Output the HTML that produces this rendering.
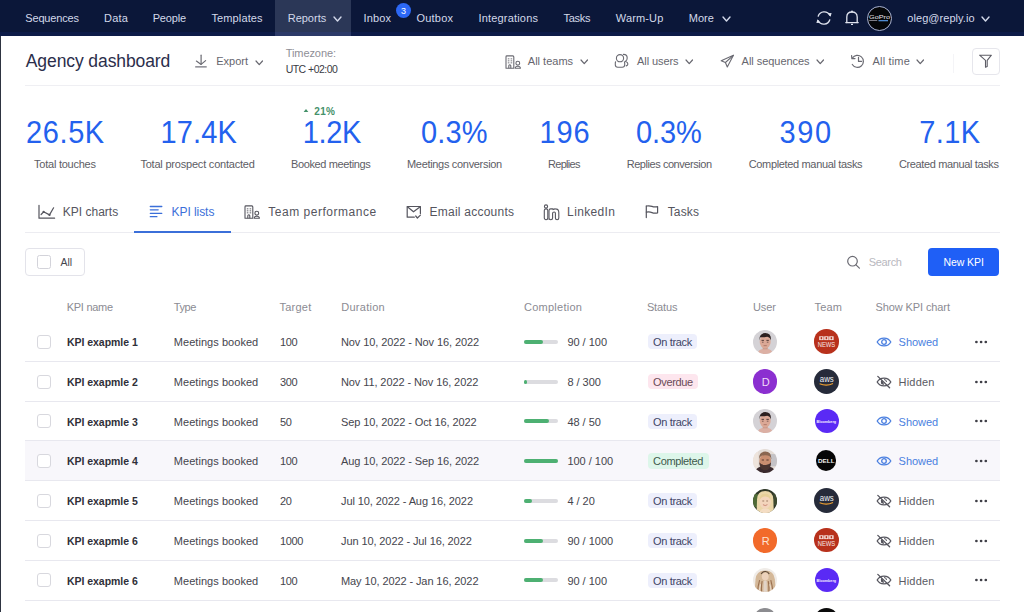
<!DOCTYPE html>
<html><head><meta charset="utf-8"><title>Agency dashboard</title>
<style>
html,body{margin:0;padding:0;}
body{width:1024px;height:612px;overflow:hidden;position:relative;background:#ffffff;font-family:"Liberation Sans",sans-serif;}
.t{position:absolute;white-space:nowrap;line-height:1;font-family:"Liberation Sans",sans-serif;}
.i{position:absolute;overflow:visible;}
</style></head><body>
<div style="position:absolute;left:0;top:0;width:1024px;height:36px;background:#0b1739"></div>
<div style="position:absolute;left:0;top:32px;width:1024px;height:4px;background:#0d1b48"></div>
<div style="position:absolute;left:275px;top:0;width:76px;height:36px;background:#2b3757"></div>
<div style="position:absolute;left:275px;top:32px;width:76px;height:4px;background:#2c3a68"></div>
<span class="t" style="left:25.30px;top:13.00px;font-size:11px;letter-spacing:-0.168px;color:#d3d9ea;">Sequences</span>
<span class="t" style="left:104.00px;top:13.00px;font-size:11px;letter-spacing:0.252px;color:#d3d9ea;">Data</span>
<span class="t" style="left:152.70px;top:13.00px;font-size:11px;letter-spacing:-0.171px;color:#d3d9ea;">People</span>
<span class="t" style="left:211.40px;top:13.00px;font-size:11px;letter-spacing:0.133px;color:#d3d9ea;">Templates</span>
<span class="t" style="left:287.70px;top:13.00px;font-size:11px;letter-spacing:-0.002px;color:#d3d9ea;">Reports</span>
<span class="t" style="left:363.60px;top:13.00px;font-size:11px;letter-spacing:0.123px;color:#d3d9ea;">Inbox</span>
<span class="t" style="left:416.40px;top:13.00px;font-size:11px;letter-spacing:0.227px;color:#d3d9ea;">Outbox</span>
<span class="t" style="left:478.40px;top:13.00px;font-size:11px;letter-spacing:0.192px;color:#d3d9ea;">Integrations</span>
<span class="t" style="left:563.60px;top:13.00px;font-size:11px;letter-spacing:-0.304px;color:#d3d9ea;">Tasks</span>
<span class="t" style="left:615.80px;top:13.00px;font-size:11px;letter-spacing:0.143px;color:#d3d9ea;">Warm-Up</span>
<span class="t" style="left:688.80px;top:13.00px;font-size:11px;letter-spacing:0.014px;color:#d3d9ea;">More</span>
<span class="t" style="left:907.30px;top:13.00px;font-size:11px;letter-spacing:0.058px;color:#d3d9ea;">oleg@reply.io</span>
<svg class="i" style="left:333px;top:15.600000000000001px;" width="9" height="6" viewBox="0 0 9 6"><path d="M1 1 L4.5 5 L8 1" fill="none" stroke="#d3d9ea" stroke-width="1.4" stroke-linecap="round" stroke-linejoin="round"/></svg>
<svg class="i" style="left:721.6px;top:15.600000000000001px;" width="9" height="6" viewBox="0 0 9 6"><path d="M1 1 L4.5 5 L8 1" fill="none" stroke="#d3d9ea" stroke-width="1.4" stroke-linecap="round" stroke-linejoin="round"/></svg>
<svg class="i" style="left:981px;top:15.600000000000001px;" width="9" height="6" viewBox="0 0 9 6"><path d="M1 1 L4.5 5 L8 1" fill="none" stroke="#d3d9ea" stroke-width="1.4" stroke-linecap="round" stroke-linejoin="round"/></svg>
<div style="position:absolute;left:395.6px;top:2.7px;width:15px;height:15px;border-radius:50%;background:#2c68f6"></div>
<span class="t" style="left:400.90px;top:7.00px;font-size:9px;letter-spacing:0.000px;color:#ffffff;">3</span>
<svg class="i" style="left:815px;top:9px;" width="18" height="18" viewBox="0 0 18 18"><g fill="none" stroke="#dfe3ee" stroke-width="1.3" stroke-linecap="round"><path d="M3.2 7.2 A6.3 6.3 0 0 1 14.8 6.2"/><path d="M14.8 10.8 A6.3 6.3 0 0 1 3.2 11.8"/></g><path d="M12.6 4.2 L16.6 3.9 L15.6 7.8 Z" fill="#dfe3ee"/><path d="M5.4 13.8 L1.4 14.1 L2.4 10.2 Z" fill="#dfe3ee"/></svg>
<svg class="i" style="left:844px;top:9px;" width="16" height="18" viewBox="0 0 16 18"><g fill="none" stroke="#dfe3ee" stroke-width="1.3" stroke-linejoin="round" stroke-linecap="round"><path d="M2.8 13.5 L2.8 8 C2.8 4.8 5 3 8 3 C11 3 13.2 4.8 13.2 8 L13.2 13.5"/><path d="M1.8 13.6 L14.2 13.6"/></g><circle cx="8" cy="2.6" r="1" fill="#dfe3ee"/><rect x="7" y="14.8" width="2" height="1.2" fill="#dfe3ee"/></svg>
<div style="position:absolute;left:867.1px;top:5.6px;width:23px;height:23px;border-radius:50%;background:#050608;border:1px solid #aab4d4"></div>
<svg class="i" style="left:867px;top:5px;" width="26" height="26" viewBox="0 0 26 26"><text x="12.6" y="14.4" text-anchor="middle" font-family="Liberation Sans" font-size="4.8" fill="#e4e4ea" textLength="21" lengthAdjust="spacingAndGlyphs">GoPro</text><rect x="2.2" y="15.2" width="8" height="0.8" fill="#9a9aa6"/><rect x="11.5" y="15" width="9.5" height="1.3" fill="#4f8ad0"/></svg>
<div style="position:absolute;left:0;top:36px;width:1.3px;height:576px;background:#2e3441"></div>
<span class="t" style="left:25.80px;top:53.00px;font-size:17.5px;letter-spacing:-0.096px;color:#2b2e4b;">Agency dashboard</span>
<span class="t" style="left:216.20px;top:56.00px;font-size:11px;letter-spacing:0.002px;color:#66666e;">Export</span>
<svg class="i" style="left:255.3px;top:59.6px;" width="8.5" height="5.6" viewBox="0 0 8.5 5.6"><path d="M1 1 L4.25 4.6 L7.5 1" fill="none" stroke="#66666e" stroke-width="1.2" stroke-linecap="round" stroke-linejoin="round"/></svg>
<svg class="i" style="left:194px;top:54px;" width="14" height="14" viewBox="0 0 14 14"><g fill="none" stroke="#6a6a72" stroke-width="1.2" stroke-linecap="round" stroke-linejoin="round"><path d="M7.1 1.2 L7.1 10.2"/><path d="M2.4 7.1 L7.1 10.4 L11.6 6.6"/></g><rect x="1.2" y="12.1" width="11.5" height="1.5" fill="#8a8a92"/></svg>
<span class="t" style="left:285.80px;top:48.00px;font-size:11px;letter-spacing:-0.093px;color:#8e8e96;">Timezone:</span>
<span class="t" style="left:285.70px;top:64.00px;font-size:10.5px;letter-spacing:-0.533px;color:#3a3a44;">UTC +02:00</span>
<span class="t" style="left:527.80px;top:56.00px;font-size:11px;letter-spacing:0.009px;color:#66666e;">All teams</span>
<svg class="i" style="left:580.2px;top:58.6px;" width="8.5" height="5.6" viewBox="0 0 8.5 5.6"><path d="M1 1 L4.25 4.6 L7.5 1" fill="none" stroke="#66666e" stroke-width="1.2" stroke-linecap="round" stroke-linejoin="round"/></svg>
<span class="t" style="left:637.00px;top:56.00px;font-size:11px;letter-spacing:-0.073px;color:#66666e;">All users</span>
<svg class="i" style="left:685.3px;top:58.6px;" width="8.5" height="5.6" viewBox="0 0 8.5 5.6"><path d="M1 1 L4.25 4.6 L7.5 1" fill="none" stroke="#66666e" stroke-width="1.2" stroke-linecap="round" stroke-linejoin="round"/></svg>
<span class="t" style="left:741.60px;top:56.00px;font-size:11px;letter-spacing:-0.041px;color:#66666e;">All sequences</span>
<svg class="i" style="left:816.2px;top:58.6px;" width="8.5" height="5.6" viewBox="0 0 8.5 5.6"><path d="M1 1 L4.25 4.6 L7.5 1" fill="none" stroke="#66666e" stroke-width="1.2" stroke-linecap="round" stroke-linejoin="round"/></svg>
<span class="t" style="left:872.60px;top:56.00px;font-size:11px;letter-spacing:0.163px;color:#66666e;">All time</span>
<svg class="i" style="left:916.4px;top:58.6px;" width="8.5" height="5.6" viewBox="0 0 8.5 5.6"><path d="M1 1 L4.25 4.6 L7.5 1" fill="none" stroke="#66666e" stroke-width="1.2" stroke-linecap="round" stroke-linejoin="round"/></svg>
<svg class="i" style="left:505.3px;top:54.5px;" width="17" height="14" viewBox="0 0 17 14"><g fill="none" stroke="#6a6a72" stroke-width="1.1" stroke-linejoin="round"><path d="M1 13.2 L1 1.8 Q1 0.9 1.9 0.9 L7.8 0.9 Q8.8 0.9 8.8 1.9 L8.8 13.2 Z"/><path d="M3.8 13.2 L3.8 10.8 Q3.8 9.8 4.8 9.8 Q5.8 9.8 5.8 10.8 L5.8 13.2"/><circle cx="12.8" cy="8.2" r="1.9"/><path d="M10.2 13.2 Q10.2 11.2 12.8 11.2 Q15.4 11.2 15.4 13.2 Z"/></g><g fill="#6a6a72"><rect x="2.8" y="3.4" width="1.6" height="0.9"/><rect x="5.6" y="3.4" width="1.6" height="0.9"/><rect x="2.8" y="5.4" width="1.6" height="0.9"/><rect x="5.6" y="5.4" width="1.6" height="0.9"/><rect x="2.8" y="7.4" width="1.6" height="0.9"/><rect x="5.6" y="7.4" width="1.6" height="0.9"/></g></svg>
<svg class="i" style="left:614px;top:53px;" width="16" height="16" viewBox="0 0 16 16"><g fill="none" stroke="#6a6a72" stroke-width="1.1" stroke-linecap="round"><circle cx="6" cy="5.2" r="3.6"/><path d="M1.6 8.8 Q1.3 9.4 1.3 10.6 L1.3 11.8 Q1.3 14.3 3.8 14.3 L8.2 14.3 Q10.7 14.3 10.7 11.8 L10.7 10.6 Q10.7 9.4 10.4 8.8"/><path d="M9.4 1.4 Q13.2 1.3 13.2 5 Q13.2 7.2 11.6 8.2"/><path d="M11.6 8.4 Q13.9 9.2 13.9 11 Q13.9 12.4 12.2 12.9"/></g></svg>
<svg class="i" style="left:720px;top:54px;" width="15" height="15" viewBox="0 0 15 15"><g fill="none" stroke="#6a6a72" stroke-width="1.1" stroke-linejoin="round" stroke-linecap="round"><path d="M13.4 1.3 L1.2 6.7 L5.4 8.5 L7.3 13 Z"/><path d="M5.4 8.5 L13.4 1.3"/></g></svg>
<svg class="i" style="left:850px;top:54px;" width="16" height="16" viewBox="0 0 16 16"><g fill="none" stroke="#6a6a72" stroke-width="1.2" stroke-linecap="round" stroke-linejoin="round"><path d="M2.4 4.0 A6 6 0 1 1 2.3 10.5"/><path d="M1.6 1.6 L1.9 4.7 L5.0 4.6"/><path d="M8.5 3.4 L8.5 7.4 L11.6 7.4"/></g></svg>
<div style="position:absolute;left:953px;top:53.5px;width:1px;height:19px;background:#f4f4f7"></div>
<div style="position:absolute;left:972.2px;top:47.6px;width:25.5px;height:25px;border:1px solid #e6e6ec;border-radius:4px"></div>
<svg class="i" style="left:978px;top:54px;" width="15" height="15" viewBox="0 0 15 15"><path d="M1.6 1.2 L13.4 1.2 L9.2 6.4 L9.2 12.6 L7.5 13.2 L7.5 6.4 Z" fill="none" stroke="#5d5d66" stroke-width="1.1" stroke-linejoin="round"/></svg>
<div style="position:absolute;left:25px;top:85.3px;width:975px;height:1px;background:#efeff3"></div>
<span class="t" style="left:26.10px;top:119.00px;font-size:29px;letter-spacing:0.581px;color:#2361ee;transform:scaleY(1.075);transform-origin:0 24px;">26.5K</span>
<span class="t" style="left:160.40px;top:119.00px;font-size:29px;letter-spacing:0.156px;color:#2361ee;transform:scaleY(1.075);transform-origin:0 24px;">17.4K</span>
<span class="t" style="left:302.70px;top:119.00px;font-size:29px;letter-spacing:-0.351px;color:#2361ee;transform:scaleY(1.075);transform-origin:0 24px;">1.2K</span>
<span class="t" style="left:421.10px;top:119.00px;font-size:29px;letter-spacing:0.103px;color:#2361ee;transform:scaleY(1.075);transform-origin:0 24px;">0.3%</span>
<span class="t" style="left:539.50px;top:119.00px;font-size:29px;letter-spacing:0.864px;color:#2361ee;transform:scaleY(1.075);transform-origin:0 24px;">196</span>
<span class="t" style="left:636.00px;top:119.00px;font-size:29px;letter-spacing:-0.064px;color:#2361ee;transform:scaleY(1.075);transform-origin:0 24px;">0.3%</span>
<span class="t" style="left:779.50px;top:119.00px;font-size:29px;letter-spacing:1.564px;color:#2361ee;transform:scaleY(1.075);transform-origin:0 24px;">390</span>
<span class="t" style="left:919.30px;top:119.00px;font-size:29px;letter-spacing:0.349px;color:#2361ee;transform:scaleY(1.075);transform-origin:0 24px;">7.1K</span>
<span class="t" style="left:34.10px;top:159.00px;font-size:11px;letter-spacing:-0.244px;color:#5d5d65;">Total touches</span>
<span class="t" style="left:140.40px;top:159.00px;font-size:11px;letter-spacing:-0.206px;color:#5d5d65;">Total prospect contacted</span>
<span class="t" style="left:291.00px;top:159.00px;font-size:11px;letter-spacing:-0.371px;color:#5d5d65;">Booked meetings</span>
<span class="t" style="left:407.00px;top:159.00px;font-size:11px;letter-spacing:-0.316px;color:#5d5d65;">Meetings conversion</span>
<span class="t" style="left:548.00px;top:159.00px;font-size:11px;letter-spacing:-0.698px;color:#5d5d65;">Replies</span>
<span class="t" style="left:626.70px;top:159.00px;font-size:11px;letter-spacing:-0.443px;color:#5d5d65;">Replies conversion</span>
<span class="t" style="left:748.70px;top:159.00px;font-size:11px;letter-spacing:-0.341px;color:#5d5d65;">Completed manual tasks</span>
<span class="t" style="left:899.00px;top:159.00px;font-size:11px;letter-spacing:-0.374px;color:#5d5d65;">Created manual tasks</span>
<span class="t" style="left:314.20px;top:107.00px;font-size:10px;letter-spacing:0.395px;color:#45916a;font-weight:700;">21%</span>
<svg class="i" style="left:303px;top:108px;" width="6" height="5" viewBox="0 0 6 5"><path d="M0.6 4 L3 1 L5.4 4 Z" fill="#45916a"/></svg>
<span class="t" style="left:62.70px;top:206.00px;font-size:12px;letter-spacing:0.016px;color:#55555e;">KPI charts</span>
<span class="t" style="left:171.50px;top:206.00px;font-size:12px;letter-spacing:-0.055px;color:#3b6fd9;">KPI lists</span>
<span class="t" style="left:268.20px;top:206.00px;font-size:12px;letter-spacing:0.530px;color:#55555e;">Team performance</span>
<span class="t" style="left:429.50px;top:206.00px;font-size:12px;letter-spacing:0.241px;color:#55555e;">Email accounts</span>
<span class="t" style="left:567.10px;top:206.00px;font-size:12px;letter-spacing:0.361px;color:#55555e;">LinkedIn</span>
<span class="t" style="left:667.70px;top:206.00px;font-size:12px;letter-spacing:0.132px;color:#55555e;">Tasks</span>
<div style="position:absolute;left:25px;top:232px;width:975px;height:1px;background:#ececf1"></div>
<div style="position:absolute;left:134.4px;top:231px;width:96.4px;height:2px;background:#3b6fd9"></div>
<svg class="i" style="left:37px;top:204px;" width="19" height="16" viewBox="0 0 19 16"><g fill="none" stroke="#55555e" stroke-width="1.2" stroke-linecap="round" stroke-linejoin="round"><path d="M2 1.3 L2 14.2 L17.6 14.2"/><path d="M4.1 10.5 L6.6 7.8 L12.5 10.9 L16.6 3.8"/></g><circle cx="6.6" cy="7.8" r="1.1" fill="#55555e"/><circle cx="12.5" cy="10.9" r="1.1" fill="#55555e"/></svg>
<svg class="i" style="left:149px;top:205px;" width="14" height="13" viewBox="0 0 14 13"><g stroke="#3b6fd9" stroke-width="1.3" stroke-linecap="round"><path d="M1.3 1.5 L12.8 1.5"/><path d="M1.3 4.8 L9.2 4.8"/><path d="M1.3 8.3 L12.8 8.3"/><path d="M1.3 11.7 L7.9 11.7"/></g></svg>
<svg class="i" style="left:244.3px;top:204.8px;" width="17" height="14" viewBox="0 0 17 14"><g fill="none" stroke="#55555e" stroke-width="1.1" stroke-linejoin="round"><path d="M1 13.2 L1 1.8 Q1 0.9 1.9 0.9 L7.8 0.9 Q8.8 0.9 8.8 1.9 L8.8 13.2 Z"/><path d="M3.8 13.2 L3.8 10.8 Q3.8 9.8 4.8 9.8 Q5.8 9.8 5.8 10.8 L5.8 13.2"/><circle cx="12.8" cy="8.2" r="1.9"/><path d="M10.2 13.2 Q10.2 11.2 12.8 11.2 Q15.4 11.2 15.4 13.2 Z"/></g><g fill="#55555e"><rect x="2.8" y="3.4" width="1.6" height="0.9"/><rect x="5.6" y="3.4" width="1.6" height="0.9"/><rect x="2.8" y="5.4" width="1.6" height="0.9"/><rect x="5.6" y="5.4" width="1.6" height="0.9"/><rect x="2.8" y="7.4" width="1.6" height="0.9"/><rect x="5.6" y="7.4" width="1.6" height="0.9"/></g></svg>
<svg class="i" style="left:406px;top:205px;" width="16" height="15" viewBox="0 0 16 15"><g fill="none" stroke="#55555e" stroke-width="1.2" stroke-linecap="round" stroke-linejoin="round"><path d="M8.3 12.2 L1.2 12.2 L1.2 1.5 L14.4 1.5 L14.4 8.6"/><path d="M1.4 1.8 L7.5 6.8 L14.2 1.8"/><path d="M9.7 11 L11.4 13 L14.4 10.1"/></g></svg>
<svg class="i" style="left:542px;top:203px;" width="19" height="18" viewBox="0 0 19 18"><g fill="none" stroke="#55555e" stroke-width="1.1"><circle cx="4" cy="3.5" r="1.6"/><rect x="2.3" y="5.9" width="3.5" height="10.8" rx="1.7"/><path d="M7 16.7 L7 7.6 Q7 5.9 8.7 5.9 L10.5 5.9 Q10.9 6 11.1 6.5 Q12.3 5.8 13.4 5.9 Q16.8 6 16.8 9.6 L16.8 15 Q16.8 16.7 15.1 16.7 Q13.4 16.7 13.4 15 L13.4 10.3 Q13.4 9 12.2 9 Q10.6 9 10.6 10.3 L10.6 15 Q10.6 16.7 8.8 16.7 Q7 16.7 7 15 Z"/></g></svg>
<svg class="i" style="left:645px;top:204px;" width="14" height="15" viewBox="0 0 14 15"><g fill="none" stroke="#55555e" stroke-width="1.2" stroke-linecap="round" stroke-linejoin="round"><path d="M1.3 13.6 L1.3 2.0"/><path d="M1.3 2.0 Q4.5 1.4 7 2.4 Q9.5 3.4 12.6 2.6 L12.6 8.8 Q9.5 9.6 7 8.6 Q4.5 7.6 1.3 8.2"/></g></svg>
<div style="position:absolute;left:25.3px;top:248.2px;width:57.5px;height:25.7px;border:1px solid #e3e3ea;border-radius:4px"></div>
<div style="position:absolute;left:37.3px;top:255.2px;width:11.6px;height:11.7px;border:1px solid #d3d3da;border-radius:2.5px;background:#fff"></div>
<span class="t" style="left:60.50px;top:257.00px;font-size:10.5px;letter-spacing:-0.083px;color:#45454d;">All</span>
<svg class="i" style="left:845px;top:255px;" width="16" height="16" viewBox="0 0 16 16"><g fill="none" stroke="#6a6a72" stroke-width="1.2" stroke-linecap="round"><circle cx="7.5" cy="6.2" r="4.8"/><path d="M11 9.8 L14.4 13.2"/></g></svg>
<span class="t" style="left:868.70px;top:257.00px;font-size:11px;letter-spacing:-0.310px;color:#b8b8be;">Search</span>
<div style="position:absolute;left:927.6px;top:248.4px;width:71.8px;height:27.6px;background:#1f5ff6;border-radius:4px"></div>
<span class="t" style="left:943.40px;top:257.00px;font-size:10.5px;letter-spacing:-0.074px;color:#ffffff;">New KPI</span>
<span class="t" style="left:66.70px;top:302.00px;font-size:11px;letter-spacing:-0.272px;color:#8b8b93;">KPI name</span>
<span class="t" style="left:173.75px;top:302.00px;font-size:11px;letter-spacing:-0.399px;color:#8b8b93;">Type</span>
<span class="t" style="left:279.40px;top:302.00px;font-size:11px;letter-spacing:0.256px;color:#8b8b93;">Target</span>
<span class="t" style="left:341.25px;top:302.00px;font-size:11px;letter-spacing:0.267px;color:#8b8b93;">Duration</span>
<span class="t" style="left:524.00px;top:302.00px;font-size:11px;letter-spacing:0.251px;color:#8b8b93;">Completion</span>
<span class="t" style="left:646.90px;top:302.00px;font-size:11px;letter-spacing:-0.117px;color:#8b8b93;">Status</span>
<span class="t" style="left:753.00px;top:302.00px;font-size:11px;letter-spacing:-0.074px;color:#8b8b93;">User</span>
<span class="t" style="left:814.60px;top:302.00px;font-size:11px;letter-spacing:0.168px;color:#8b8b93;">Team</span>
<span class="t" style="left:875.40px;top:302.00px;font-size:11px;letter-spacing:-0.093px;color:#8b8b93;">Show KPI chart</span>
<div style="position:absolute;left:25px;top:440px;width:975px;height:40px;background:#f8f7fb"></div>
<div style="position:absolute;left:25px;top:361px;width:975px;height:1px;background:#e8e8ef"></div>
<div style="position:absolute;left:37.2px;top:334.80px;width:12px;height:12px;border:1px solid #d8d8de;border-radius:3px;background:#fff"></div>
<span class="t" style="left:66.90px;top:337.00px;font-size:10.5px;letter-spacing:-0.025px;color:#2f2f38;font-weight:700;">KPI exapmle 1</span>
<span class="t" style="left:173.80px;top:337.00px;font-size:11px;letter-spacing:0.045px;color:#45454d;">Meetings booked</span>
<span class="t" style="left:280.10px;top:337.00px;font-size:11px;letter-spacing:-0.374px;color:#45454d;">100</span>
<span class="t" style="left:341.00px;top:337.00px;font-size:11px;letter-spacing:-0.098px;color:#45454d;">Nov 10, 2022 - Nov 16, 2022</span>
<div style="position:absolute;left:524.2px;top:339.80px;width:33.8px;height:4px;border-radius:2px;background:#dcdce0"></div>
<div style="position:absolute;left:524.2px;top:339.80px;width:18.60px;height:4px;border-radius:2px;background:#4db072"></div>
<span class="t" style="left:567.40px;top:337.00px;font-size:11px;letter-spacing:-0.022px;color:#45454d;">90 / 100</span>
<div style="position:absolute;left:647.8px;top:334.20px;width:49.60px;height:15.3px;border-radius:4px;background:#edeffc"></div>
<span class="t" style="left:653.10px;top:337.00px;font-size:11px;letter-spacing:-0.356px;color:#404565;">On track</span>
<div style="position:absolute;left:753.10px;top:329.60px;width:24.4px;height:24.4px;border-radius:50%;overflow:hidden"><svg width="24.4" height="24.4" viewBox="0 0 24 24" style="display:block"><rect width="24" height="24" fill="#d4d2d6"/><path d="M4 24 Q5 18.5 12 18 Q19 18.5 20 24 Z" fill="#dcb0a4"/><rect x="9.6" y="15" width="4.8" height="4" fill="#c99888"/><ellipse cx="12" cy="11.6" rx="5.4" ry="6.6" fill="#dba896"/><path d="M6.4 10.4 Q5.8 3.2 12 3 Q18.4 3.2 17.6 10.4 Q17 7 14 6.6 Q10 7.4 7.2 7.2 Q6.6 8.4 6.4 10.4 Z" fill="#2c2020"/><path d="M8.4 10.2 h2.4 M13.2 10.2 h2.4" stroke="#4a3432" stroke-width="0.9"/><path d="M8.8 12 h1.6 M13.6 12 h1.6" stroke="#6a4a44" stroke-width="0.8"/><path d="M10.4 15.4 h3.2" stroke="#a87060" stroke-width="0.8"/></svg></div>
<div style="position:absolute;left:814.20px;top:329.40px;width:24.4px;height:24.2px;border-radius:50%;background:#b8311c"></div>
<svg class="i" style="left:814.0px;top:329.3px;" width="25" height="25" viewBox="0 0 25 25"><g fill="#f5e6e2"><rect x="5.2" y="7.3" width="4.4" height="3.8"/><rect x="10.2" y="7.3" width="4.4" height="3.8"/><rect x="15.2" y="7.3" width="4.4" height="3.8"/></g><g fill="#b8311c"><rect x="6.6" y="8.1" width="1.6" height="2.2"/><rect x="11.6" y="8.1" width="1.6" height="2.2"/><rect x="16.6" y="8.1" width="1.6" height="2.2"/></g><text x="12.5" y="17.6" text-anchor="middle" font-family="Liberation Sans" font-size="6.4" fill="#f6e8e4" textLength="17.6" lengthAdjust="spacingAndGlyphs">NEWS</text></svg>
<svg class="i" style="left:876px;top:335.8px;" width="16" height="12" viewBox="0 0 16 12"><g fill="none" stroke="#4a7fe0" stroke-width="1.3"><path d="M1.2 6 C4 0.8 12 0.8 14.8 6 C12 11.2 4 11.2 1.2 6 Z"/><circle cx="8" cy="6" r="2.3"/></g></svg>
<span class="t" style="left:898.60px;top:337.00px;font-size:11px;letter-spacing:-0.051px;color:#4a7fe0;">Showed</span>
<svg class="i" style="left:974px;top:339.8px;" width="14" height="4" viewBox="0 0 14 4"><g fill="#3f3f47"><circle cx="2.4" cy="2" r="1.35"/><circle cx="7.1" cy="2" r="1.35"/><circle cx="11.8" cy="2" r="1.35"/></g></svg>
<div style="position:absolute;left:25px;top:401px;width:975px;height:1px;background:#e8e8ef"></div>
<div style="position:absolute;left:37.2px;top:374.55px;width:12px;height:12px;border:1px solid #d8d8de;border-radius:3px;background:#fff"></div>
<span class="t" style="left:66.90px;top:377.00px;font-size:10.5px;letter-spacing:-0.025px;color:#2f2f38;font-weight:700;">KPI exapmle 2</span>
<span class="t" style="left:173.80px;top:377.00px;font-size:11px;letter-spacing:0.045px;color:#45454d;">Meetings booked</span>
<span class="t" style="left:280.10px;top:377.00px;font-size:11px;letter-spacing:-0.374px;color:#45454d;">300</span>
<span class="t" style="left:341.00px;top:377.00px;font-size:11px;letter-spacing:-0.098px;color:#45454d;">Nov 11, 2022 - Nov 16, 2022</span>
<div style="position:absolute;left:524.2px;top:379.55px;width:33.8px;height:4px;border-radius:2px;background:#dcdce0"></div>
<div style="position:absolute;left:524.2px;top:379.55px;width:3.00px;height:4px;border-radius:2px;background:#4db072"></div>
<span class="t" style="left:567.40px;top:377.00px;font-size:11px;letter-spacing:-0.022px;color:#45454d;">8 / 300</span>
<div style="position:absolute;left:647.8px;top:373.95px;width:50.55px;height:15.3px;border-radius:4px;background:#fde6ee"></div>
<span class="t" style="left:653.10px;top:377.00px;font-size:11px;letter-spacing:-0.356px;color:#6a4a57;">Overdue</span>
<div style="position:absolute;left:753.10px;top:369.35px;width:24.4px;height:24.4px;border-radius:50%;background:#8b2fd0"></div>
<span class="t" style="left:761.70px;top:377.00px;font-size:11px;letter-spacing:0.000px;color:#f1dcf8;">D</span>
<div style="position:absolute;left:814.00px;top:369.05px;width:25px;height:25px;border-radius:50%;background:#262b3a"></div>
<svg class="i" style="left:814.0px;top:369.05px;" width="25" height="25" viewBox="0 0 25 25"><text x="12.8" y="13.4" text-anchor="middle" font-family="Liberation Sans" font-size="8.6" fill="#eef0f4" textLength="14" lengthAdjust="spacingAndGlyphs">aws</text><path d="M5.6 14.8 Q12.5 17.6 19 14.6" fill="none" stroke="#f0a030" stroke-width="1.1"/></svg>
<svg class="i" style="left:876px;top:374.55px;" width="16" height="14" viewBox="0 0 16 14"><g fill="none" stroke="#55555e" stroke-width="1.3" stroke-linecap="round"><path d="M1.2 7 C4 1.8 12 1.8 14.8 7 C12 12.2 4 12.2 1.2 7 Z"/><path d="M1.8 1.4 L13.6 12.8"/></g><path d="M5.9 5.0 A2.6 2.6 0 0 0 8.2 9.6 Z" fill="#55555e"/><path d="M8 4.5 A2.5 2.5 0 0 1 10.5 7" fill="none" stroke="#55555e" stroke-width="1"/></svg>
<span class="t" style="left:898.60px;top:377.00px;font-size:11px;letter-spacing:0.188px;color:#5a5a63;">Hidden</span>
<svg class="i" style="left:974px;top:379.55px;" width="14" height="4" viewBox="0 0 14 4"><g fill="#3f3f47"><circle cx="2.4" cy="2" r="1.35"/><circle cx="7.1" cy="2" r="1.35"/><circle cx="11.8" cy="2" r="1.35"/></g></svg>
<div style="position:absolute;left:25px;top:440px;width:975px;height:1px;background:#e8e8ef"></div>
<div style="position:absolute;left:37.2px;top:414.30px;width:12px;height:12px;border:1px solid #d8d8de;border-radius:3px;background:#fff"></div>
<span class="t" style="left:66.90px;top:417.00px;font-size:10.5px;letter-spacing:-0.025px;color:#2f2f38;font-weight:700;">KPI exapmle 3</span>
<span class="t" style="left:173.80px;top:417.00px;font-size:11px;letter-spacing:0.045px;color:#45454d;">Meetings booked</span>
<span class="t" style="left:280.10px;top:417.00px;font-size:11px;letter-spacing:-0.374px;color:#45454d;">50</span>
<span class="t" style="left:341.00px;top:417.00px;font-size:11px;letter-spacing:-0.098px;color:#45454d;">Sep 10, 2022 - Oct 16, 2022</span>
<div style="position:absolute;left:524.2px;top:419.30px;width:33.8px;height:4px;border-radius:2px;background:#dcdce0"></div>
<div style="position:absolute;left:524.2px;top:419.30px;width:25.30px;height:4px;border-radius:2px;background:#4db072"></div>
<span class="t" style="left:567.40px;top:417.00px;font-size:11px;letter-spacing:-0.022px;color:#45454d;">48 / 50</span>
<div style="position:absolute;left:647.8px;top:413.70px;width:49.60px;height:15.3px;border-radius:4px;background:#edeffc"></div>
<span class="t" style="left:653.10px;top:417.00px;font-size:11px;letter-spacing:-0.356px;color:#404565;">On track</span>
<div style="position:absolute;left:753.10px;top:409.10px;width:24.4px;height:24.4px;border-radius:50%;overflow:hidden"><svg width="24.4" height="24.4" viewBox="0 0 24 24" style="display:block"><rect width="24" height="24" fill="#d4d2d6"/><path d="M4 24 Q5 18.5 12 18 Q19 18.5 20 24 Z" fill="#dcb0a4"/><rect x="9.6" y="15" width="4.8" height="4" fill="#c99888"/><ellipse cx="12" cy="11.6" rx="5.4" ry="6.6" fill="#dba896"/><path d="M6.4 10.4 Q5.8 3.2 12 3 Q18.4 3.2 17.6 10.4 Q17 7 14 6.6 Q10 7.4 7.2 7.2 Q6.6 8.4 6.4 10.4 Z" fill="#2c2020"/><path d="M8.4 10.2 h2.4 M13.2 10.2 h2.4" stroke="#4a3432" stroke-width="0.9"/><path d="M8.8 12 h1.6 M13.6 12 h1.6" stroke="#6a4a44" stroke-width="0.8"/><path d="M10.4 15.4 h3.2" stroke="#a87060" stroke-width="0.8"/></svg></div>
<div style="position:absolute;left:814.50px;top:409.10px;width:24px;height:24px;border-radius:50%;background:#5a2af5"></div>
<svg class="i" style="left:814.0px;top:408.8px;" width="25" height="25" viewBox="0 0 25 25"><text x="12.3" y="14.2" text-anchor="middle" font-family="Liberation Sans" font-size="4" font-weight="700" fill="#f4f0ff" textLength="19.6" lengthAdjust="spacingAndGlyphs">Bloomberg</text></svg>
<svg class="i" style="left:876px;top:415.3px;" width="16" height="12" viewBox="0 0 16 12"><g fill="none" stroke="#4a7fe0" stroke-width="1.3"><path d="M1.2 6 C4 0.8 12 0.8 14.8 6 C12 11.2 4 11.2 1.2 6 Z"/><circle cx="8" cy="6" r="2.3"/></g></svg>
<span class="t" style="left:898.60px;top:417.00px;font-size:11px;letter-spacing:-0.051px;color:#4a7fe0;">Showed</span>
<svg class="i" style="left:974px;top:419.3px;" width="14" height="4" viewBox="0 0 14 4"><g fill="#3f3f47"><circle cx="2.4" cy="2" r="1.35"/><circle cx="7.1" cy="2" r="1.35"/><circle cx="11.8" cy="2" r="1.35"/></g></svg>
<div style="position:absolute;left:25px;top:480px;width:975px;height:1px;background:#e8e8ef"></div>
<div style="position:absolute;left:37.2px;top:454.05px;width:12px;height:12px;border:1px solid #d8d8de;border-radius:3px;background:#fff"></div>
<span class="t" style="left:66.90px;top:456.00px;font-size:10.5px;letter-spacing:-0.025px;color:#2f2f38;font-weight:700;">KPI exapmle 4</span>
<span class="t" style="left:173.80px;top:456.00px;font-size:11px;letter-spacing:0.045px;color:#45454d;">Meetings booked</span>
<span class="t" style="left:280.10px;top:456.00px;font-size:11px;letter-spacing:-0.374px;color:#45454d;">100</span>
<span class="t" style="left:341.00px;top:456.00px;font-size:11px;letter-spacing:-0.098px;color:#45454d;">Aug 10, 2022 - Sep 16, 2022</span>
<div style="position:absolute;left:524.2px;top:459.05px;width:33.8px;height:4px;border-radius:2px;background:#dcdce0"></div>
<div style="position:absolute;left:524.2px;top:459.05px;width:33.80px;height:4px;border-radius:2px;background:#4db072"></div>
<span class="t" style="left:567.40px;top:456.00px;font-size:11px;letter-spacing:-0.022px;color:#45454d;">100 / 100</span>
<div style="position:absolute;left:647.8px;top:453.45px;width:60.85px;height:15.3px;border-radius:4px;background:#ddf6ea"></div>
<span class="t" style="left:653.10px;top:456.00px;font-size:11px;letter-spacing:-0.356px;color:#3e5a4c;">Completed</span>
<div style="position:absolute;left:753.10px;top:448.85px;width:24.4px;height:24.4px;border-radius:50%;overflow:hidden"><svg width="24.4" height="24.4" viewBox="0 0 24 24" style="display:block"><rect width="24" height="24" fill="#e4dcd6"/><rect x="17" y="5" width="7" height="12" fill="#c4c2c6"/><rect x="0" y="3" width="5" height="16" fill="#eee4dc"/><path d="M1 24 Q3 17 12 16.5 Q21 17 23 24 Z" fill="#3a2a2e"/><ellipse cx="12" cy="12.2" rx="5.8" ry="7.2" fill="#c98e70"/><path d="M6.2 13 Q6.5 20.8 12 20.8 Q17.5 20.8 17.8 13 Q15.5 16.2 12 15.8 Q8.5 16.2 6.2 13 Z" fill="#4a3430"/><path d="M6 10 Q5.6 2.6 12 2.5 Q18.4 2.6 18 10 Q16.8 6 12 6.2 Q7.2 6 6 10 Z" fill="#8a6650"/><path d="M8.6 10.8 h2.2 M13.2 10.8 h2.2" stroke="#5a3a30" stroke-width="1"/></svg></div>
<div style="position:absolute;left:816.30px;top:450.45px;width:20.2px;height:20.2px;border-radius:50%;background:#060606"></div>
<svg class="i" style="left:815.9px;top:450.45px;" width="21.2" height="21.2" viewBox="0 0 21.2 21.2"><text x="10.3" y="12.6" text-anchor="middle" font-family="Liberation Sans" font-size="5.8" font-weight="700" fill="#f2f2f2" textLength="16.4" lengthAdjust="spacingAndGlyphs">DELL</text></svg>
<svg class="i" style="left:876px;top:455.05px;" width="16" height="12" viewBox="0 0 16 12"><g fill="none" stroke="#4a7fe0" stroke-width="1.3"><path d="M1.2 6 C4 0.8 12 0.8 14.8 6 C12 11.2 4 11.2 1.2 6 Z"/><circle cx="8" cy="6" r="2.3"/></g></svg>
<span class="t" style="left:898.60px;top:456.00px;font-size:11px;letter-spacing:-0.051px;color:#4a7fe0;">Showed</span>
<svg class="i" style="left:974px;top:459.05px;" width="14" height="4" viewBox="0 0 14 4"><g fill="#3f3f47"><circle cx="2.4" cy="2" r="1.35"/><circle cx="7.1" cy="2" r="1.35"/><circle cx="11.8" cy="2" r="1.35"/></g></svg>
<div style="position:absolute;left:25px;top:520px;width:975px;height:1px;background:#e8e8ef"></div>
<div style="position:absolute;left:37.2px;top:493.80px;width:12px;height:12px;border:1px solid #d8d8de;border-radius:3px;background:#fff"></div>
<span class="t" style="left:66.90px;top:496.00px;font-size:10.5px;letter-spacing:-0.025px;color:#2f2f38;font-weight:700;">KPI exapmle 5</span>
<span class="t" style="left:173.80px;top:496.00px;font-size:11px;letter-spacing:0.045px;color:#45454d;">Meetings booked</span>
<span class="t" style="left:280.10px;top:496.00px;font-size:11px;letter-spacing:-0.374px;color:#45454d;">20</span>
<span class="t" style="left:341.00px;top:496.00px;font-size:11px;letter-spacing:-0.098px;color:#45454d;">Jul 10, 2022 - Aug 16, 2022</span>
<div style="position:absolute;left:524.2px;top:498.80px;width:33.8px;height:4px;border-radius:2px;background:#dcdce0"></div>
<div style="position:absolute;left:524.2px;top:498.80px;width:7.80px;height:4px;border-radius:2px;background:#4db072"></div>
<span class="t" style="left:567.40px;top:496.00px;font-size:11px;letter-spacing:-0.022px;color:#45454d;">4 / 20</span>
<div style="position:absolute;left:647.8px;top:493.20px;width:49.60px;height:15.3px;border-radius:4px;background:#edeffc"></div>
<span class="t" style="left:653.10px;top:496.00px;font-size:11px;letter-spacing:-0.356px;color:#404565;">On track</span>
<div style="position:absolute;left:753.10px;top:488.60px;width:24.4px;height:24.4px;border-radius:50%;overflow:hidden"><svg width="24.4" height="24.4" viewBox="0 0 24 24" style="display:block"><rect width="24" height="24" fill="#2e3626"/><rect x="0" y="5" width="5" height="13" fill="#4e6a36"/><rect x="20" y="4" width="4" height="12" fill="#3e4a30"/><path d="M3.5 24 L4 10 Q4.5 2 12 2 Q19.5 2 20 10 L20.5 24 Z" fill="#ead6a8"/><path d="M6 24 Q7 19 12 19 Q17 19 18 24 Z" fill="#f4ddc4"/><ellipse cx="12" cy="12.6" rx="5.6" ry="6.8" fill="#f3d5bc"/><path d="M6.4 10.5 Q7 4.6 12 4.6 Q17 4.6 17.6 10.5 Q15 7.2 12 7.4 Q9 7.2 6.4 10.5 Z" fill="#e6cf98"/><path d="M9.2 11.8 h1.8 M13 11.8 h1.8" stroke="#8a6a50" stroke-width="0.8"/><path d="M9.8 15.4 Q12 17.2 14.2 15.4" stroke="#c47a6a" stroke-width="0.8" fill="none"/></svg></div>
<div style="position:absolute;left:814.00px;top:488.30px;width:25px;height:25px;border-radius:50%;background:#262b3a"></div>
<svg class="i" style="left:814.0px;top:488.3px;" width="25" height="25" viewBox="0 0 25 25"><text x="12.8" y="13.4" text-anchor="middle" font-family="Liberation Sans" font-size="8.6" fill="#eef0f4" textLength="14" lengthAdjust="spacingAndGlyphs">aws</text><path d="M5.6 14.8 Q12.5 17.6 19 14.6" fill="none" stroke="#f0a030" stroke-width="1.1"/></svg>
<svg class="i" style="left:876px;top:493.8px;" width="16" height="14" viewBox="0 0 16 14"><g fill="none" stroke="#55555e" stroke-width="1.3" stroke-linecap="round"><path d="M1.2 7 C4 1.8 12 1.8 14.8 7 C12 12.2 4 12.2 1.2 7 Z"/><path d="M1.8 1.4 L13.6 12.8"/></g><path d="M5.9 5.0 A2.6 2.6 0 0 0 8.2 9.6 Z" fill="#55555e"/><path d="M8 4.5 A2.5 2.5 0 0 1 10.5 7" fill="none" stroke="#55555e" stroke-width="1"/></svg>
<span class="t" style="left:898.60px;top:496.00px;font-size:11px;letter-spacing:0.188px;color:#5a5a63;">Hidden</span>
<svg class="i" style="left:974px;top:498.8px;" width="14" height="4" viewBox="0 0 14 4"><g fill="#3f3f47"><circle cx="2.4" cy="2" r="1.35"/><circle cx="7.1" cy="2" r="1.35"/><circle cx="11.8" cy="2" r="1.35"/></g></svg>
<div style="position:absolute;left:25px;top:560px;width:975px;height:1px;background:#e8e8ef"></div>
<div style="position:absolute;left:37.2px;top:533.55px;width:12px;height:12px;border:1px solid #d8d8de;border-radius:3px;background:#fff"></div>
<span class="t" style="left:66.90px;top:536.00px;font-size:10.5px;letter-spacing:-0.025px;color:#2f2f38;font-weight:700;">KPI exapmle 6</span>
<span class="t" style="left:173.80px;top:536.00px;font-size:11px;letter-spacing:0.045px;color:#45454d;">Meetings booked</span>
<span class="t" style="left:280.10px;top:536.00px;font-size:11px;letter-spacing:-0.374px;color:#45454d;">1000</span>
<span class="t" style="left:341.00px;top:536.00px;font-size:11px;letter-spacing:-0.098px;color:#45454d;">Jun 10, 2022 - Jul 16, 2022</span>
<div style="position:absolute;left:524.2px;top:538.55px;width:33.8px;height:4px;border-radius:2px;background:#dcdce0"></div>
<div style="position:absolute;left:524.2px;top:538.55px;width:18.80px;height:4px;border-radius:2px;background:#4db072"></div>
<span class="t" style="left:567.40px;top:536.00px;font-size:11px;letter-spacing:-0.022px;color:#45454d;">90 / 1000</span>
<div style="position:absolute;left:647.8px;top:532.95px;width:49.60px;height:15.3px;border-radius:4px;background:#edeffc"></div>
<span class="t" style="left:653.10px;top:536.00px;font-size:11px;letter-spacing:-0.356px;color:#404565;">On track</span>
<div style="position:absolute;left:753.10px;top:528.35px;width:24.4px;height:24.4px;border-radius:50%;background:#f26a2a"></div>
<span class="t" style="left:761.70px;top:536.00px;font-size:11px;letter-spacing:0.000px;color:#fde3d3;">R</span>
<div style="position:absolute;left:814.20px;top:528.15px;width:24.4px;height:24.2px;border-radius:50%;background:#b8311c"></div>
<svg class="i" style="left:814.0px;top:528.05px;" width="25" height="25" viewBox="0 0 25 25"><g fill="#f5e6e2"><rect x="5.2" y="7.3" width="4.4" height="3.8"/><rect x="10.2" y="7.3" width="4.4" height="3.8"/><rect x="15.2" y="7.3" width="4.4" height="3.8"/></g><g fill="#b8311c"><rect x="6.6" y="8.1" width="1.6" height="2.2"/><rect x="11.6" y="8.1" width="1.6" height="2.2"/><rect x="16.6" y="8.1" width="1.6" height="2.2"/></g><text x="12.5" y="17.6" text-anchor="middle" font-family="Liberation Sans" font-size="6.4" fill="#f6e8e4" textLength="17.6" lengthAdjust="spacingAndGlyphs">NEWS</text></svg>
<svg class="i" style="left:876px;top:533.55px;" width="16" height="14" viewBox="0 0 16 14"><g fill="none" stroke="#55555e" stroke-width="1.3" stroke-linecap="round"><path d="M1.2 7 C4 1.8 12 1.8 14.8 7 C12 12.2 4 12.2 1.2 7 Z"/><path d="M1.8 1.4 L13.6 12.8"/></g><path d="M5.9 5.0 A2.6 2.6 0 0 0 8.2 9.6 Z" fill="#55555e"/><path d="M8 4.5 A2.5 2.5 0 0 1 10.5 7" fill="none" stroke="#55555e" stroke-width="1"/></svg>
<span class="t" style="left:898.60px;top:536.00px;font-size:11px;letter-spacing:0.188px;color:#5a5a63;">Hidden</span>
<svg class="i" style="left:974px;top:538.55px;" width="14" height="4" viewBox="0 0 14 4"><g fill="#3f3f47"><circle cx="2.4" cy="2" r="1.35"/><circle cx="7.1" cy="2" r="1.35"/><circle cx="11.8" cy="2" r="1.35"/></g></svg>
<div style="position:absolute;left:25px;top:600px;width:975px;height:1px;background:#e8e8ef"></div>
<div style="position:absolute;left:37.2px;top:573.30px;width:12px;height:12px;border:1px solid #d8d8de;border-radius:3px;background:#fff"></div>
<span class="t" style="left:66.90px;top:576.00px;font-size:10.5px;letter-spacing:-0.025px;color:#2f2f38;font-weight:700;">KPI exapmle 6</span>
<span class="t" style="left:173.80px;top:576.00px;font-size:11px;letter-spacing:0.045px;color:#45454d;">Meetings booked</span>
<span class="t" style="left:280.10px;top:576.00px;font-size:11px;letter-spacing:-0.374px;color:#45454d;">100</span>
<span class="t" style="left:341.00px;top:576.00px;font-size:11px;letter-spacing:-0.098px;color:#45454d;">May 10, 2022 - Jan 16, 2022</span>
<div style="position:absolute;left:524.2px;top:578.30px;width:33.8px;height:4px;border-radius:2px;background:#dcdce0"></div>
<div style="position:absolute;left:524.2px;top:578.30px;width:18.80px;height:4px;border-radius:2px;background:#4db072"></div>
<span class="t" style="left:567.40px;top:576.00px;font-size:11px;letter-spacing:-0.022px;color:#45454d;">90 / 100</span>
<div style="position:absolute;left:647.8px;top:572.70px;width:49.60px;height:15.3px;border-radius:4px;background:#edeffc"></div>
<span class="t" style="left:653.10px;top:576.00px;font-size:11px;letter-spacing:-0.356px;color:#404565;">On track</span>
<div style="position:absolute;left:753.10px;top:568.10px;width:24.4px;height:24.4px;border-radius:50%;overflow:hidden"><svg width="24.4" height="24.4" viewBox="0 0 24 24" style="display:block"><rect width="24" height="24" fill="#f0ece8"/><path d="M1.5 24 L2.5 11 Q3.5 2.5 12 2.5 Q20.5 2.5 21.5 11 L22.5 24 Z" fill="#d4b898"/><path d="M4.5 24 Q5 17 6.5 12 M8.5 24 Q8 18 9 13 M15.5 24 Q16 18 15 13 M19.5 24 Q19 17 17.5 12" stroke="#9a7050" stroke-width="1.1" fill="none"/><path d="M6 24 Q6.5 19 7.5 16 M18 24 Q17.5 19 16.5 16" stroke="#ece0d2" stroke-width="0.9" fill="none"/><ellipse cx="12" cy="8.4" rx="3.4" ry="3.8" fill="#ecd2bc"/><path d="M10.2 24 L10.6 12.6 Q12 11.8 13.4 12.6 L13.8 24 Z" fill="#e2d4c8"/><path d="M8 6 Q9.5 3.2 12 3.4 Q14.5 3.2 16 6" stroke="#5e4a3a" stroke-width="1.1" fill="none"/></svg></div>
<div style="position:absolute;left:814.50px;top:568.10px;width:24px;height:24px;border-radius:50%;background:#5a2af5"></div>
<svg class="i" style="left:814.0px;top:567.8px;" width="25" height="25" viewBox="0 0 25 25"><text x="12.3" y="14.2" text-anchor="middle" font-family="Liberation Sans" font-size="4" font-weight="700" fill="#f4f0ff" textLength="19.6" lengthAdjust="spacingAndGlyphs">Bloomberg</text></svg>
<svg class="i" style="left:876px;top:573.3px;" width="16" height="14" viewBox="0 0 16 14"><g fill="none" stroke="#55555e" stroke-width="1.3" stroke-linecap="round"><path d="M1.2 7 C4 1.8 12 1.8 14.8 7 C12 12.2 4 12.2 1.2 7 Z"/><path d="M1.8 1.4 L13.6 12.8"/></g><path d="M5.9 5.0 A2.6 2.6 0 0 0 8.2 9.6 Z" fill="#55555e"/><path d="M8 4.5 A2.5 2.5 0 0 1 10.5 7" fill="none" stroke="#55555e" stroke-width="1"/></svg>
<span class="t" style="left:898.60px;top:576.00px;font-size:11px;letter-spacing:0.188px;color:#5a5a63;">Hidden</span>
<svg class="i" style="left:974px;top:578.3px;" width="14" height="4" viewBox="0 0 14 4"><g fill="#3f3f47"><circle cx="2.4" cy="2" r="1.35"/><circle cx="7.1" cy="2" r="1.35"/><circle cx="11.8" cy="2" r="1.35"/></g></svg>
<div style="position:absolute;left:753.1px;top:608px;width:24.4px;height:24.4px;border-radius:50%;background:radial-gradient(circle at 50% 40%, #3a3a3e 0 30%, #8c8c90 31% 55%, #d8d8da 56%)"></div>
<div style="position:absolute;left:814px;top:607.8px;width:25px;height:25px;border-radius:50%;background:#0a0a0a"></div>
</body></html>
